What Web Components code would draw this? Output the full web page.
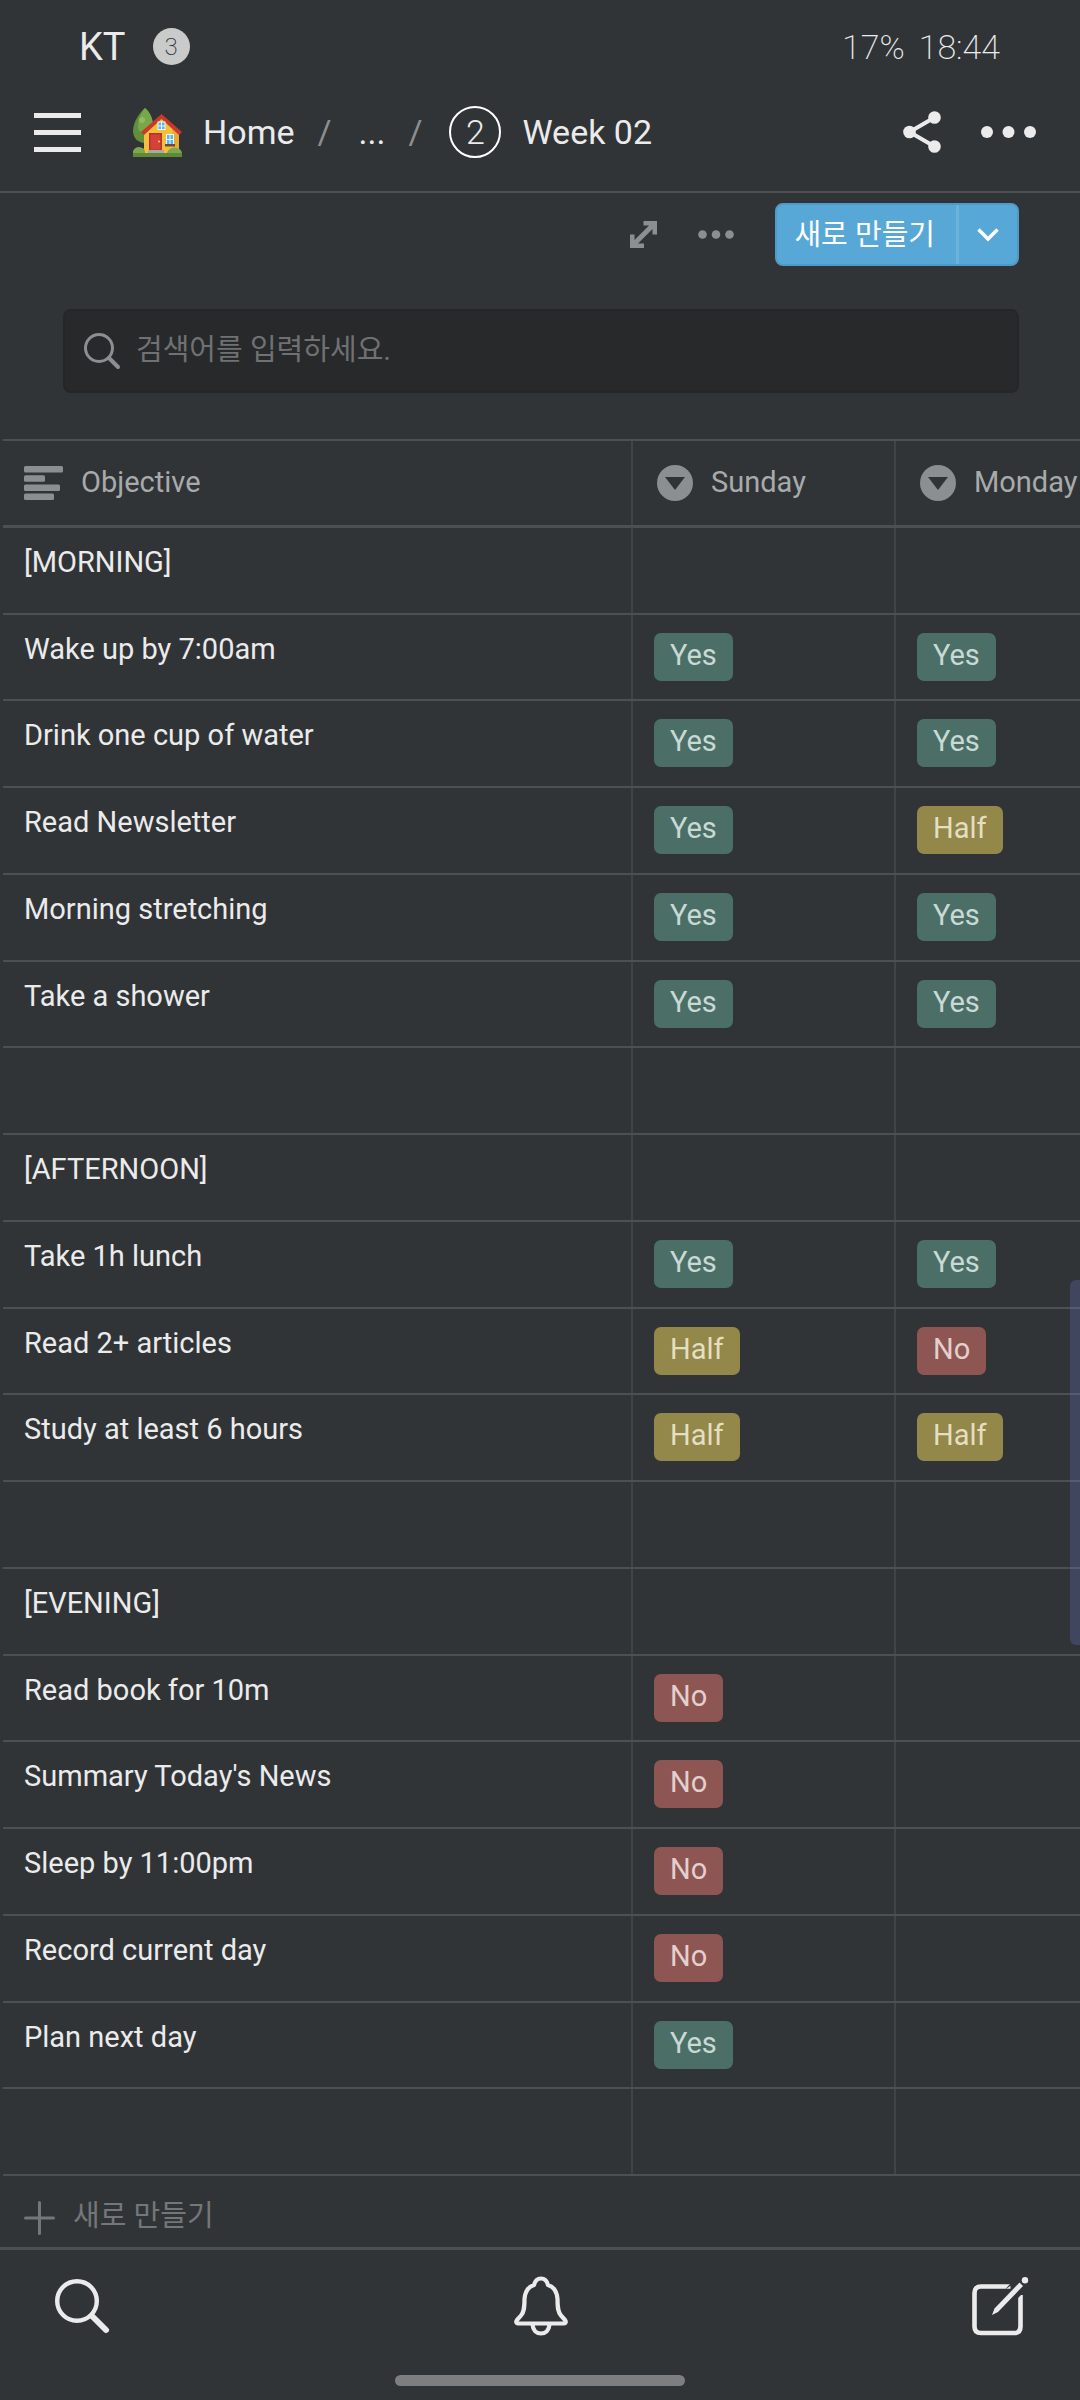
<!DOCTYPE html>
<html lang="ko">
<head>
<meta charset="utf-8">
<meta name="viewport" content="width=device-width, initial-scale=1">
<title>Week 02</title>
<style>
    html {
        --bg: #303437;
        --line: #4c5053;
        --line-soft: #404447;
        --text: #ebebeb;
        --muted: #8b8f92;
        --faint: #747779;
        --edge: 61px;
        background-color: var(--bg);
    }
    body {
        margin: 0;
        color: var(--text);
        font-family: Roboto, "Noto Sans CJK KR", sans-serif;
        font-size: 29px;
    }
</style>
</head>
<body>
<week-page></week-page>

<script>
const define = (name, html, setup) => {
    const template = document.createElement('template');
    template.innerHTML = html;
    window.customElements.define(name, class extends HTMLElement {
        constructor(){
            super();
            this.attachShadow({mode:'open'}).appendChild(template.content.cloneNode(true));
        }
        connectedCallback(){
            if (setup) setup(this, this.shadowRoot);
        }
    });
};

const buttonReset = `
    button {
        display: flex;
        align-items: center;
        margin: 0;
        padding: 0;
        border: none;
        background: none;
        color: inherit;
        font: inherit;
        cursor: pointer;
    }
`;

// [width, height, markup]
const icons = {
    menu: [47, 40, `<path d="M0 3.5h47M0 20.5h47M0 37.5h47" stroke="currentColor" stroke-width="5"/>`],
    home: [49, 49, `
        <path d="M12 0C17 4 21 13 20 22c-1 9-4 13-8 13C5 35 0 30 0 23 0 14 7 4 12 0z" fill="#5f8f3a"/>
        <path d="M12 0C17 4 20 11 20 17c-3 7-9 9-14 6C3 17 7 6 12 0z" fill="#7aa64a"/>
        <circle cx="9" cy="12" r="3" fill="#93b95c"/>
        <path d="M11 22 28.500 8 46 23v24H11z" fill="#f6be3d"/>
        <path d="M39 17l7 6v24h-5z" fill="#eaa834"/>
        <path d="M28.500 6 49 24l-3 3L28.500 11 11 27l-3-3z" fill="#c7392b"/>
        <rect x="24.500" y="13.500" width="8" height="8.500" fill="#eaf4fb"/>
        <path d="M25.500 14.500h2.500v3h-2.500zM29 14.500h2.500v3H29zM25.500 18.500h2.500v2.500h-2.500zM29 18.500h2.500v2.500H29z" fill="#58b5e8"/>
        <rect x="16" y="25" width="13" height="18" fill="#b5332b"/>
        <rect x="17.500" y="26.500" width="10" height="15" fill="#d2423a"/>
        <circle cx="26" cy="33.500" r="1" fill="#fbd75b"/>
        <rect x="33" y="26" width="8" height="11" fill="#eaf4fb"/>
        <path d="M34 27h2.500v4H34zM37.500 27H40v4h-2.500zM34 32h2.500v4H34zM37.500 32H40v4h-2.500z" fill="#58b5e8"/>
        <rect x="32" y="36" width="10" height="2.500" fill="#6b4a38"/>
        <path d="M15 42h16v4H15z" fill="#a9a9a4"/>
        <path d="M0 49v-6c2-4 6-5 9-3 2 0 3 2 3 5h22c1-4 5-6 8-5 4 0 7 2 7 6v3z" fill="#7fa650"/>
        <path d="M0 45h49v4H0z" fill="#5f8a38"/>`],
    share: [38, 42, `
        <path d="M31.500 6.500 6.500 21l25 14.500" fill="none" stroke="currentColor" stroke-width="4"/>
        <circle cx="31.500" cy="6.500" r="6.300" fill="currentColor"/>
        <circle cx="6.500" cy="21" r="6.300" fill="currentColor"/>
        <circle cx="31.500" cy="35.500" r="6.300" fill="currentColor"/>`],
    more: [55, 12, `<g fill="currentColor"><circle cx="6" cy="6" r="6"/><circle cx="27.500" cy="6" r="6"/><circle cx="49" cy="6" r="6"/></g>`],
    moreSmall: [36, 9, `<g fill="currentColor"><circle cx="4.500" cy="4.500" r="4.300"/><circle cx="18" cy="4.500" r="4.300"/><circle cx="31.500" cy="4.500" r="4.300"/></g>`],
    expand: [27, 27, `
        <path d="M13.500 0H27v13.500h-4.500V8L8 22.500h6V27H0V13.500h4.500V19L19 4.500h-5.500z" fill="currentColor"/>`],
    chevron: [22, 14, `<path d="m1.500 1.500 9.500 9.500 9.500-9.500" fill="none" stroke="currentColor" stroke-width="3.500"/>`],
    find: [36, 36, `
        <circle cx="15" cy="15" r="13.500" fill="none" stroke="currentColor" stroke-width="3"/>
        <path d="m25 25 9 9" stroke="currentColor" stroke-width="4" stroke-linecap="round"/>`],
    title: [39, 34, `
        <g fill="currentColor"><rect width="39" height="6.500" rx="1.500"/><rect y="9.200" width="21" height="6.500" rx="1.500"/><rect y="18.400" width="36" height="6.500" rx="1.500"/><rect y="27.500" width="30" height="6.500" rx="1.500"/></g>`],
    select: [36, 36, `
        <circle cx="18" cy="18" r="18" fill="currentColor"/>
        <path d="M8 12h20L18 25z" fill="#303437"/>`],
    plus: [31, 34, `<path d="M15.500 1.500v31M1.500 17h28" stroke="currentColor" stroke-width="3" stroke-linecap="round"/>`],
    search: [54, 54, `
        <circle cx="22" cy="22" r="19.800" fill="none" stroke="currentColor" stroke-width="4.400"/>
        <path d="m37 37 14 14" stroke="currentColor" stroke-width="6" stroke-linecap="round"/>`],
    bell: [54, 60, `
        <g fill="none" stroke="currentColor" stroke-width="4.200" stroke-linejoin="round">
            <path d="M27 2.500c-4 0-6 2.500-7 6.500C13 11 11 17 10.500 23c0 9-.5 13-3.500 16.500L3 44c-1.500 2-.5 3.500 1 3.500h46c1.500 0 2.500-1.500 1-3.500l-4-4.500C44 36 43.500 32 43.500 23 43 17 41 11 34 9c-1-4-3-6.500-7-6.500z"/>
            <path d="M18.500 48.500c.5 6 4 9 8.500 9s8-3 8.500-9"/>
        </g>`],
    compose: [56, 59, `
        <path d="M38.500 9.500H9q-6.500 0-6.500 6.500v33.500Q2.500 56 9 56h33q6.500 0 6.500-6.500V18" fill="none" stroke="currentColor" stroke-width="4.600"/>
        <path d="M33 12.500 38.500 6.500H42zM44 23l7-7v-3l-7 7z" fill="#303437"/>
        <path d="m47.500 5.500 3.500 3.500-25 26-6 3 2.500-6.500z" fill="currentColor"/>
        <circle cx="53" cy="3.200" r="3.200" fill="currentColor"/>`]
};

define('ui-icon', `
    <style>
        :host { display: block; flex: none; }
        svg { display: block; overflow: visible; }
    </style>
    <svg aria-hidden="true"></svg>
`, (el, shadow) => {
    const [width, height, markup] = icons[el.getAttribute('name')], svg = shadow.querySelector('svg');
    svg.setAttribute('width', width);
    svg.setAttribute('height', height);
    svg.setAttribute('viewBox', `0 0 ${width} ${height}`);
    svg.innerHTML = markup;
});

define('status-bar', `
    <style>
        :host {
            display: flex;
            align-items: center;
            height: 53px;
            padding: 20px 80px 0 79px;
            font-size: 38px;
            line-height: 52px;
        }
        .badge {
            width: 37px;
            height: 37px;
            margin-left: 27px;
            border-radius: 50%;
            background-color: #c9cbcb;
            color: #303437;
            font-size: 24px;
            font-weight: 200;
            line-height: 38px;
            text-align: center;
        }
        .right {
            display: flex;
            gap: 14px;
            margin-left: auto;
            font-size: 34px;
            font-weight: 200;
        }
    </style>
    <span><slot name="carrier"></slot></span>
    <span class="badge"><slot name="count"></slot></span>
    <span class="right"><slot name="battery"></slot><slot name="time"></slot></span>
`);

define('top-bar', `
    <style>
        ${buttonReset}
        :host {
            display: flex;
            align-items: center;
            height: 118px;
            padding: 0 44px 0 34px;
            border-bottom: 2px solid var(--line);
            font-size: 34px;
            line-height: 40px;
        }
        nav {
            display: flex;
            align-items: center;
            margin-left: 52px;
        }
        a {
            display: flex;
            align-items: center;
            gap: 21px;
            color: inherit;
            text-decoration: none;
            white-space: nowrap;
        }
        .slash {
            margin: 0 27px 0 23px;
            color: var(--muted);
        }
        .number {
            box-sizing: border-box;
            width: 52px;
            height: 52px;
            border: 2px solid #ffffff;
            border-radius: 50%;
            line-height: 48px;
            font-weight: 300;
            text-align: center;
        }
        .actions {
            display: flex;
            align-items: center;
            gap: 40px;
            margin-left: auto;
        }
    </style>
    <button aria-label="menu"><ui-icon name="menu"></ui-icon></button>
    <nav>
        <a href="#home"><ui-icon name="home"></ui-icon>Home</a>
        <span class="slash">/</span>
        <a href="#parents">...</a>
        <span class="slash">/</span>
        <a href="#week"><span class="number">2</span>Week 02</a>
    </nav>
    <div class="actions">
        <button aria-label="share"><ui-icon name="share"></ui-icon></button>
        <button aria-label="more"><ui-icon name="more"></ui-icon></button>
    </div>
`);

define('view-toolbar', `
    <style>
        ${buttonReset}
        :host {
            display: flex;
            align-items: center;
            justify-content: flex-end;
            gap: 41px;
            padding: 10px var(--edge) 0;
            color: var(--muted);
        }
        .split {
            display: flex;
            box-sizing: border-box;
            height: 63px;
            border: 2px solid #4f9bc8;
            border-radius: 8px;
            background-color: #57a8d7;
            color: #ffffff;
        }
        .new {
            padding: 0 21px 6px 17px;
        }
        .drop {
            justify-content: center;
            width: 61px;
            border-left: 3px solid #6bb3dc;
        }
    </style>
    <button aria-label="expand"><ui-icon name="expand"></ui-icon></button>
    <button aria-label="view options"><ui-icon name="moreSmall"></ui-icon></button>
    <div class="split">
        <button class="new"><slot></slot></button>
        <button class="drop" aria-label="templates"><ui-icon name="chevron"></ui-icon></button>
    </div>
`);

define('search-field', `
    <style>
        :host {
            display: block;
            padding: 43px var(--edge) 46px 63px;
        }
        label {
            display: flex;
            align-items: center;
            gap: 16px;
            box-sizing: border-box;
            height: 84px;
            padding: 0 20px 0 19px;
            border: 2px solid #242628;
            border-radius: 8px;
            background-color: #28292b;
            color: var(--muted);
        }
        input {
            flex: 1;
            min-width: 0;
            height: 44px;
            margin-bottom: 2px;
            padding: 0;
            border: none;
            outline: none;
            background: none;
            color: var(--text);
            font: inherit;
        }
        input::placeholder {
            color: #6f7173;
            opacity: 1;
        }
    </style>
    <label><ui-icon name="find"></ui-icon><input type="search" aria-label="search"></label>
`, (el, shadow) => {
    shadow.querySelector('input').placeholder = el.getAttribute('placeholder');
});

define('status-tag', `
    <style>
        :host {
            display: block;
            padding: 0 16px 4px;
            border-radius: 7px;
            line-height: 44px;
        }
        :host([value="Yes"]) { background-color: #4b6f67; color: #c9d9d5; }
        :host([value="Half"]) { background-color: #93874a; color: #e4dfc1; }
        :host([value="No"]) { background-color: #8e5652; color: #e3cfce; }
    </style>
    <slot></slot>
`);

const rows = [
    ['[MORNING]'],
    ['Wake up by 7:00am', 'Yes', 'Yes'],
    ['Drink one cup of water', 'Yes', 'Yes'],
    ['Read Newsletter', 'Yes', 'Half'],
    ['Morning stretching', 'Yes', 'Yes'],
    ['Take a shower', 'Yes', 'Yes'],
    [],
    ['[AFTERNOON]'],
    ['Take 1h lunch', 'Yes', 'Yes'],
    ['Read 2+ articles', 'Half', 'No'],
    ['Study at least 6 hours', 'Half', 'Half'],
    [],
    ['[EVENING]'],
    ['Read book for 10m', 'No'],
    ["Summary Today's News", 'No'],
    ['Sleep by 11:00pm', 'No'],
    ['Record current day', 'No'],
    ['Plan next day', 'Yes'],
    []
];

define('habit-table', `
    <style>
        :host {
            display: flex;
            flex-direction: column;
            position: relative;
            padding-left: 3px;
            overflow: hidden;
        }
        table {
            flex: 1;
            display: flex;
            flex-direction: column;
            border-top: 2px solid var(--line);
        }
        thead {
            display: block;
        }
        tbody {
            flex: 1;
            display: grid;
            grid-auto-rows: minmax(80px, 1fr);
        }
        tr {
            display: grid;
            grid-template-columns: 630px 263px minmax(184px, 1fr);
            border-bottom: 2px solid var(--line);
        }
        thead tr {
            height: 84px;
            border-bottom-width: 3px;
        }
        th, td {
            display: flex;
            align-items: flex-start;
            box-sizing: border-box;
            padding: 16px 0 0 21px;
            border-right: 2px solid var(--line-soft);
            line-height: 36px;
            white-space: nowrap;
        }
        th {
            align-items: center;
            gap: 18px;
            padding-top: 0;
            color: #a8aaab;
            font-weight: 400;
        }
        th span {
            padding-bottom: 3px;
        }
        th ui-icon {
            color: var(--muted);
        }
        th + th {
            padding-left: 24px;
        }
        td + td {
            padding: 18px 0 0 21px;
        }
        th:last-child, td:last-child {
            border-right: none;
        }
        .thumb {
            position: absolute;
            top: 841px;
            right: 0;
            width: 10px;
            height: 365px;
            border-radius: 6px 0 0 6px;
            background-color: rgba(108, 124, 211, 0.25);
        }
    </style>
    <table>
        <thead>
            <tr>
                <th><ui-icon name="title"></ui-icon><span>Objective</span></th>
                <th><ui-icon name="select"></ui-icon><span>Sunday</span></th>
                <th><ui-icon name="select"></ui-icon><span>Monday</span></th>
            </tr>
        </thead>
        <tbody></tbody>
    </table>
    <div class="thumb"></div>
`, (el, shadow) => {
    const tag = value => value ? `<status-tag value="${value}">${value}</status-tag>` : '';
    shadow.querySelector('tbody').innerHTML = rows.map(([name = '', sun, mon]) => `
        <tr><td>${name}</td><td>${tag(sun)}</td><td>${tag(mon)}</td></tr>
    `).join('');
});

define('add-row', `
    <style>
        ${buttonReset}
        :host {
            display: block;
        }
        button {
            gap: 18px;
            width: 100%;
            height: 71px;
            padding: 12px 24px 0;
            color: var(--faint);
            line-height: 36px;
        }
        span {
            padding-bottom: 3px;
        }
    </style>
    <button><ui-icon name="plus"></ui-icon><span><slot></slot></span></button>
`);

define('bottom-nav', `
    <style>
        ${buttonReset}
        :host {
            display: block;
            height: 150px;
            border-top: 3px solid var(--line);
        }
        nav {
            display: flex;
            align-items: center;
            justify-content: space-between;
            height: 112px;
            padding: 0 52px 0 55px;
        }
        .handle {
            width: 290px;
            height: 11px;
            margin: 13px auto 0;
            border-radius: 6px;
            background-color: #7d7e80;
        }
    </style>
    <nav>
        <button aria-label="search"><ui-icon name="search"></ui-icon></button>
        <button aria-label="updates"><ui-icon name="bell"></ui-icon></button>
        <button aria-label="new page"><ui-icon name="compose"></ui-icon></button>
    </nav>
    <div class="handle"></div>
`);

define('week-page', `
    <style>
        :host {
            display: flex;
            flex-direction: column;
            min-height: 100vh;
        }
        habit-table {
            flex: 1;
        }
    </style>
    <status-bar>
        <span slot="carrier">KT</span>
        <span slot="count">3</span>
        <span slot="battery">17%</span>
        <span slot="time">18:44</span>
    </status-bar>
    <top-bar></top-bar>
    <view-toolbar>새로 만들기</view-toolbar>
    <search-field placeholder="검색어를 입력하세요."></search-field>
    <habit-table></habit-table>
    <add-row>새로 만들기</add-row>
    <bottom-nav></bottom-nav>
`);
</script>
</body>
</html>
